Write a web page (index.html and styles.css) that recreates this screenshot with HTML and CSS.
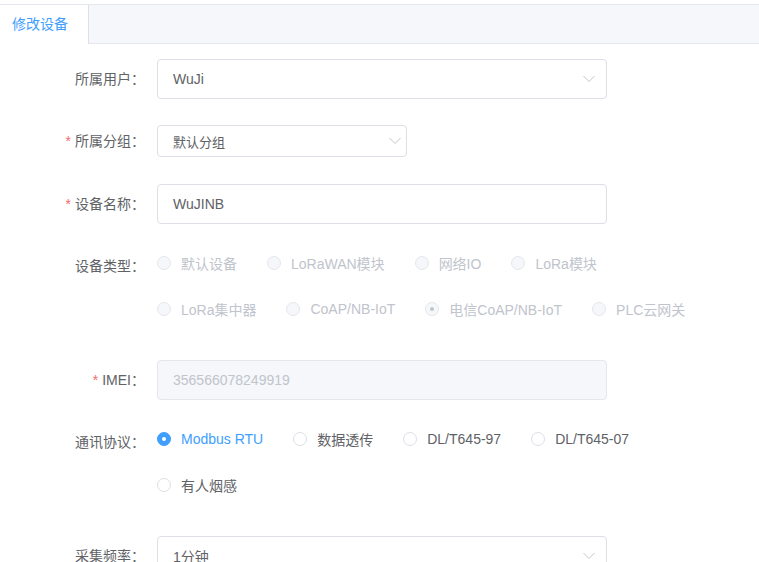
FILE: index.html
```html
<!DOCTYPE html>
<html lang="zh-CN">
<head>
<meta charset="utf-8">
<title>修改设备</title>
<link rel="stylesheet" href="styles.css">
</head>
<body>
<div class="card">
  <div class="tabs-header">
    <div class="tab active">修改设备</div>
  </div>
  <div class="tabs-content">
    <form class="form">
      <div class="form-item">
        <label class="label">所属用户：</label>
        <div class="content">
          <div class="select">
            <span class="value">WuJi</span>
            <span class="arrow"><svg width="12" height="8" viewBox="0 0 12 8"><polyline points="0.5,1 6,6.5 11.5,1" fill="none" stroke="#c0c4cc" stroke-width="1"/></svg></span>
          </div>
        </div>
      </div>
      <div class="form-item item-small">
        <label class="label"><span class="req">*</span>所属分组：</label>
        <div class="content">
          <div class="select select-small">
            <span class="value">默认分组</span>
            <span class="arrow"><svg width="12" height="8" viewBox="0 0 12 8"><polyline points="0.5,1 6,6.5 11.5,1" fill="none" stroke="#c0c4cc" stroke-width="1"/></svg></span>
          </div>
        </div>
      </div>
      <div class="form-item">
        <label class="label"><span class="req">*</span>设备名称：</label>
        <div class="content">
          <div class="input"><span class="value">WuJINB</span></div>
        </div>
      </div>
      <div class="form-item">
        <label class="label">设备类型：</label>
        <div class="content">
          <div class="radio-group">
            <span class="radio disabled"><span class="circle"></span><span class="rtext">默认设备</span></span>
            <span class="radio disabled"><span class="circle"></span><span class="rtext">LoRaWAN模块</span></span>
            <span class="radio disabled"><span class="circle"></span><span class="rtext">网络IO</span></span>
            <span class="radio disabled"><span class="circle"></span><span class="rtext">LoRa模块</span></span>
            <span class="radio disabled"><span class="circle"></span><span class="rtext">LoRa集中器</span></span>
            <span class="radio disabled"><span class="circle"></span><span class="rtext">CoAP/NB-IoT</span></span>
            <span class="radio disabled checked"><span class="circle"></span><span class="rtext">电信CoAP/NB-IoT</span></span>
            <span class="radio disabled"><span class="circle"></span><span class="rtext">PLC云网关</span></span>
          </div>
        </div>
      </div>
      <div class="form-item">
        <label class="label"><span class="req">*</span>IMEI：</label>
        <div class="content">
          <div class="input input-disabled"><span class="value">356566078249919</span></div>
        </div>
      </div>
      <div class="form-item">
        <label class="label">通讯协议：</label>
        <div class="content">
          <div class="radio-group">
            <span class="radio checked"><span class="circle"></span><span class="rtext">Modbus RTU</span></span>
            <span class="radio"><span class="circle"></span><span class="rtext">数据透传</span></span>
            <span class="radio"><span class="circle"></span><span class="rtext">DL/T645-97</span></span>
            <span class="radio"><span class="circle"></span><span class="rtext">DL/T645-07</span></span>
            <span class="radio"><span class="circle"></span><span class="rtext">有人烟感</span></span>
          </div>
        </div>
      </div>
      <div class="form-item">
        <label class="label">采集频率：</label>
        <div class="content">
          <div class="select">
            <span class="value">1分钟</span>
            <span class="arrow"><svg width="12" height="8" viewBox="0 0 12 8"><polyline points="0.5,1 6,6.5 11.5,1" fill="none" stroke="#c0c4cc" stroke-width="1"/></svg></span>
          </div>
        </div>
      </div>
    </form>
  </div>
</div>
</body>
</html>
```
FILE: styles.css
```css
* { box-sizing: border-box; }
html, body { margin: 0; padding: 0; background: #fff; }
body {
  font-family: "Liberation Sans", "Noto Sans CJK SC", Arial, sans-serif;
  font-size: 14px;
  color: #606266;
  overflow: hidden;
  height: 562px;
}
.card {
  margin-top: 4px;
  border-top: 1px solid #e4e7ed;
}
.tabs-header {
  display: flex;
  height: 39px;
  background: #f5f7fa;
  border-bottom: 1px solid #e4e7ed;
}
.tab {
  height: 39px;
  margin-bottom: -1px;
  padding: 0 20px 0 12px;
  line-height: 39px;
  font-size: 14px;
  color: #409eff;
  background: #fff;
  border-right: 1px solid #dcdfe6;
}
.tabs-content {
  padding: 15px 15px 0 15px;
}
.form {
  width: 697px;
}
.form-item {
  display: flex;
  margin-bottom: 22px;
}
.item-small { margin-bottom: 23px; }
.label {
  flex: 0 0 142px;
  text-align: right;
  padding-right: 12px;
  line-height: 40px;
  font-size: 14px;
  color: #606266;
  white-space: nowrap;
}
.req {
  color: #f56c6c;
  margin-right: 4px;
}
.content {
  flex: 1;
  min-height: 40px;
  display: flex;
  align-items: center;
}
.select, .input {
  width: 450px;
  height: 40px;
  border: 1px solid #dcdfe6;
  border-radius: 4px;
  background: #fff;
  display: flex;
  align-items: center;
  padding-left: 15px;
  font-size: 14px;
  color: #606266;
}
.select .value, .input .value { flex: 1; }
.select-small {
  width: 250px;
  height: 32px;
  font-size: 13px;
}
.arrow {
  width: 25px;
  margin-right: 5px;
  display: flex;
  justify-content: center;
  align-items: center;
}
.select-small .arrow { width: 22px; margin-right: 0; }
.arrow svg { display: block; }
.input-disabled {
  background: #f5f7fa;
  border-color: #e4e7ed;
  color: #c0c4cc;
}
.radio-group {
  display: flex;
  flex-wrap: wrap;
  width: 100%;
  margin: -1px 0 1px 0;
}
.radio {
  display: flex;
  align-items: center;
  height: 35px;
  margin: 0 30px 11px 0;
  font-size: 14px;
  color: #606266;
  white-space: nowrap;
}
.radio:last-child { margin-right: 0; }
.circle {
  position: relative;
  width: 14px;
  height: 14px;
  border: 1px solid #dcdfe6;
  border-radius: 50%;
  background: #fff;
  flex: 0 0 14px;
}
.rtext { padding-left: 10px; }
.radio.checked { color: #409eff; }
.radio.checked .circle {
  background: #409eff;
  border-color: #409eff;
}
.radio.checked .circle::after {
  content: "";
  position: absolute;
  left: 50%;
  top: 50%;
  width: 4px;
  height: 4px;
  margin: -2px 0 0 -2px;
  border-radius: 50%;
  background: #fff;
}
.radio.disabled { color: #c0c4cc; }
.radio.disabled .circle {
  background: #f5f7fa;
  border-color: #e4e7ed;
}
.radio.disabled.checked .circle::after { background: #c0c4cc; }
```
